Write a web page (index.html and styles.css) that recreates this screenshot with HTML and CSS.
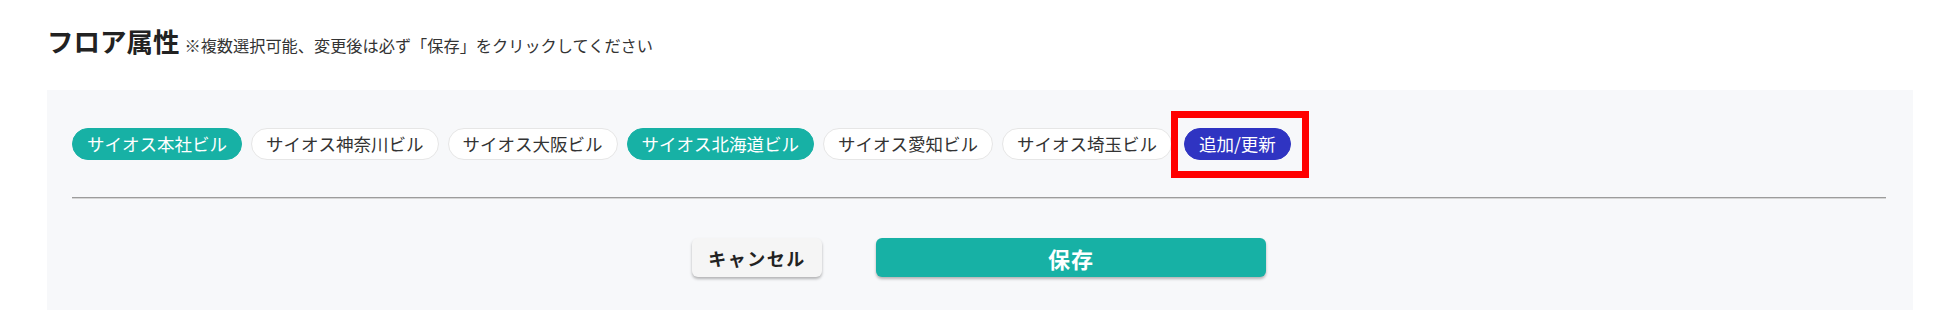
FILE: index.html
```html
<!DOCTYPE html>
<html lang="ja">
<head>
<meta charset="utf-8">
<title>フロア属性</title>
<link rel="stylesheet" href="styles.css">
</head>
<body>
<div class="page">
  <div class="header">
    <h2 class="title">フロア属性</h2>
    <span class="note">※複数選択可能、変更後は必ず「保存」をクリックしてください</span>
  </div>
  <section class="panel">
    <div class="chips">
      <span class="chip chip-on">サイオス本社ビル</span>
      <span class="chip">サイオス神奈川ビル</span>
      <span class="chip">サイオス大阪ビル</span>
      <span class="chip chip-on">サイオス北海道ビル</span>
      <span class="chip">サイオス愛知ビル</span>
      <span class="chip">サイオス埼玉ビル</span>
      <span class="chip chip-add highlighted">追加/更新</span>
    </div>
    <hr class="divider">
    <div class="actions">
      <button class="btn btn-cancel">キャンセル</button>
      <button class="btn btn-save">保存</button>
    </div>
  </section>
</div>
</body>
</html>
```

FILE: styles.css
```css
html, body {
  margin: 0;
  padding: 0;
  background: #ffffff;
}

body {
  font-family: "Noto Sans CJK JP", "Noto Sans", sans-serif;
  color: #333333;
}

.page {
  padding: 0 38px 0 47px;
}

.header {
  display: flex;
  align-items: baseline;
  padding-top: 27px;
  height: 62px;
  box-sizing: border-box;
}

.title {
  margin: 0;
  font-size: 26.5px;
  line-height: 27px;
  font-weight: 700;
  color: #222222;
}

.note {
  margin-left: 5px;
  font-size: 16.2px;
  color: #333333;
}

.panel {
  margin-top: 28px;
  background: #f7f8fa;
  padding: 38px 27px 33px 25px;
}

.chips {
  display: flex;
  flex-wrap: wrap;
  gap: 9px;
}

.chip {
  box-sizing: border-box;
  height: 32px;
  line-height: 30px;
  padding: 0 14px;
  border: 1px solid #e6e6e6;
  border-radius: 16px;
  background: #ffffff;
  font-size: 17.5px;
  color: #333333;
  white-space: nowrap;
}

.chip-on {
  background: #17b1a5;
  border-color: #17b1a5;
  color: #ffffff;
}

.chip-add {
  margin-left: 3px;
  background: #2f34c2;
  border-color: #2f34c2;
  color: #ffffff;
}

.highlighted {
  position: relative;
}

.highlighted::after {
  content: "";
  position: absolute;
  top: -18px;
  left: -14px;
  right: -19px;
  bottom: -19px;
  border: 7px solid #ff0000;
}

.divider {
  margin: 37px 0 0 0;
  height: 0;
  border: 0;
  border-top: 1px solid #9c9c9c;
  border-bottom: 1px solid #d6d6d6;
}

.actions {
  display: flex;
  justify-content: center;
  gap: 54px;
  margin-top: 39px;
}

.btn {
  box-sizing: border-box;
  height: 39px;
  border: 0;
  border-radius: 6px;
  font-family: "Noto Sans CJK JP", "Noto Sans", sans-serif;
  font-weight: 700;
  cursor: pointer;
  box-shadow: 0 2px 3px rgba(0, 0, 0, 0.28);
}

.btn-cancel {
  width: 130px;
  background: #f5f5f5;
  color: #222222;
  font-size: 18px;
  letter-spacing: 1.5px;
}

.btn-save {
  width: 390px;
  background: #17b1a5;
  color: #ffffff;
  font-size: 22px;
  letter-spacing: 1px;
}
```
